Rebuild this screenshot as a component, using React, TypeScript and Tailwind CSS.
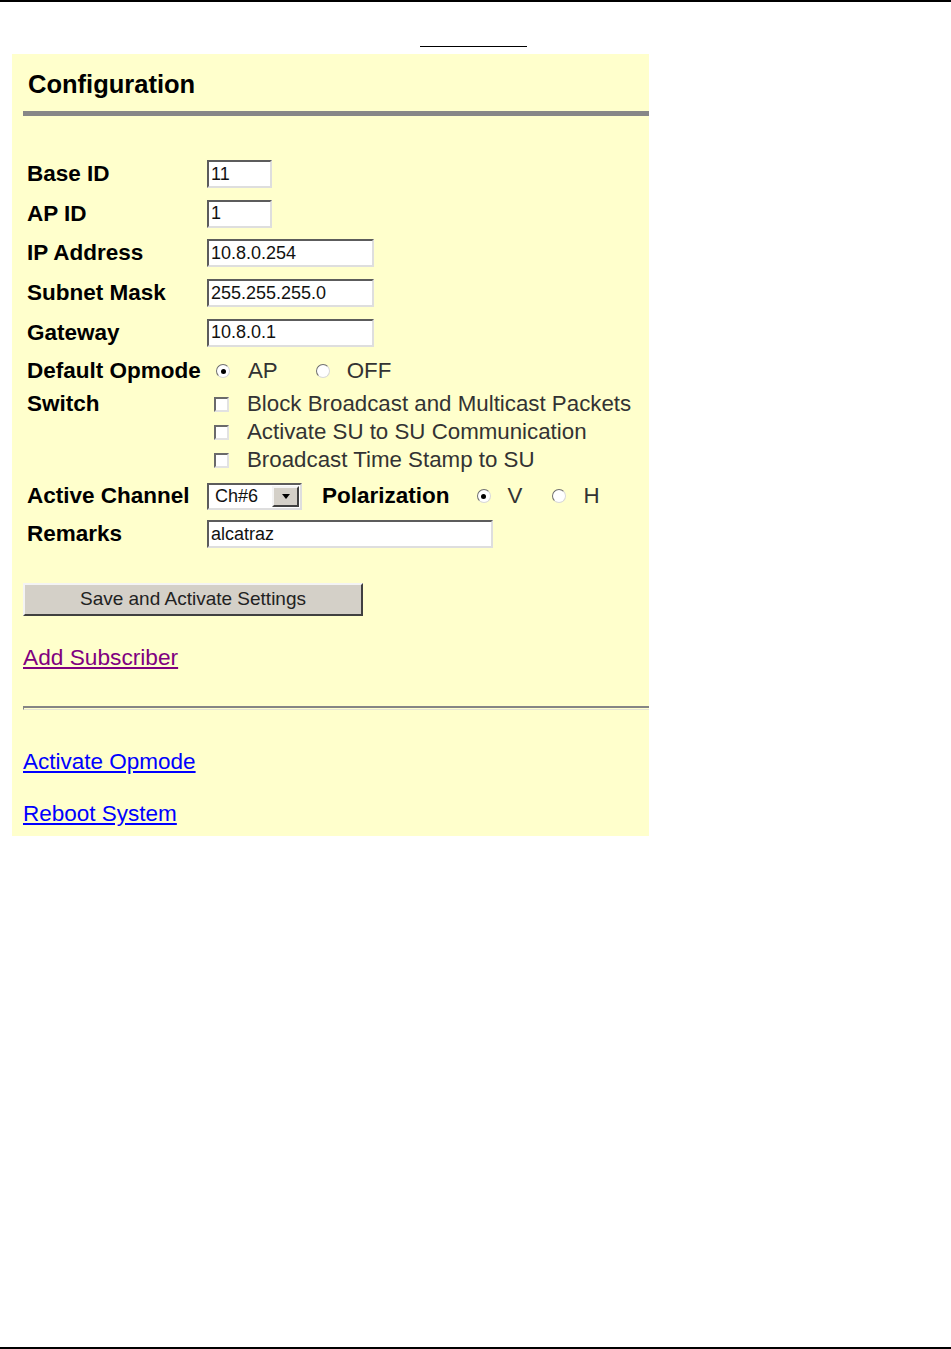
import React from 'react';

const inset =
  'border-2 border-t-[#5c5c5c] border-l-[#5c5c5c] border-r-[#dedede] border-b-[#dedede] bg-white';

const Field = ({ value, width }: { value: string; width: string }) => (
  <input
    readOnly
    defaultValue={value}
    className={`${inset} ${width} h-[28px] px-[2px] text-[18px] leading-none text-[#111] outline-none`}
  />
);

const Radio = ({ checked }: { checked?: boolean }) => (
  <span className="flex h-[14px] w-[14px] shrink-0 items-center justify-center rounded-full border border-t-[#6f6f6f] border-l-[#6f6f6f] border-r-[#d8d8d8] border-b-[#d8d8d8] bg-white">
    {checked && <span className="h-[5px] w-[5px] rounded-full bg-black" />}
  </span>
);

const Checkbox = () => (
  <span className="block h-[15px] w-[15px] shrink-0 border-2 border-t-[#6a6a6a] border-l-[#6a6a6a] border-r-[#e2e2e2] border-b-[#e2e2e2] bg-white" />
);

const Label = ({ children }: { children: React.ReactNode }) => (
  <span className="ml-[4px] w-[180px] shrink-0 text-[22.5px] font-bold text-black">{children}</span>
);

const options = [
  'Block Broadcast and Multicast Packets',
  'Activate SU to SU Communication',
  'Broadcast Time Stamp to SU',
];

export default function App() {
  return (
    <div
      className="flex min-h-[1349px] w-[951px] flex-col bg-white"
      style={{ fontFamily: '"Liberation Sans", Arial, sans-serif' }}
    >
      <div className="h-[2px] w-full bg-black" />
      <div className="ml-[420px] mt-[44px] h-px w-[107px] bg-black" />

      {/* Configuration panel */}
      <div className="ml-[12px] mt-[7px] flex h-[782px] w-[637px] flex-col bg-[#ffffcc] pl-[11px] pt-[15px]">
        <h1 className="ml-[5px] h-[30px] text-[25.5px] font-bold leading-[30px] text-black">Configuration</h1>
        <div className="mt-[12px] h-[5px] w-[626px] bg-[#878787]" />

        <div className="mt-[38px] flex flex-col">
          <div className="flex h-[40px] items-center">
            <Label>Base ID</Label>
            <Field value="11" width="w-[65px]" />
          </div>
          <div className="flex h-[39px] items-center">
            <Label>AP ID</Label>
            <Field value="1" width="w-[65px]" />
          </div>
          <div className="flex h-[40px] items-center">
            <Label>IP Address</Label>
            <Field value="10.8.0.254" width="w-[167px]" />
          </div>
          <div className="flex h-[40px] items-center">
            <Label>Subnet Mask</Label>
            <Field value="255.255.255.0" width="w-[167px]" />
          </div>
          <div className="flex h-[39px] items-center">
            <Label>Gateway</Label>
            <Field value="10.8.0.1" width="w-[167px]" />
          </div>

          <div className="flex h-[38px] items-center text-[22.3px] text-[#333]">
            <Label>Default Opmode</Label>
            <span className="ml-[9px]"><Radio checked /></span>
            <span className="ml-[18px]">AP</span>
            <span className="ml-[38px]"><Radio /></span>
            <span className="ml-[17px]">OFF</span>
          </div>

          <div className="flex">
            <div className="flex h-[28px] items-center">
              <Label>Switch</Label>
            </div>
            <div className="flex flex-col">
              {options.map((o) => (
                <div key={o} className="flex h-[28px] items-center text-[22.3px] text-[#333]">
                  <span className="ml-[7px]"><Checkbox /></span>
                  <span className="ml-[18px]">{o}</span>
                </div>
              ))}
            </div>
          </div>

          <div className="flex h-[44px] items-center text-[22.3px] text-[#333]">
            <Label>Active Channel</Label>
            <div className={`${inset} flex h-[27px] w-[95px] items-center`}>
              <span className="flex-1 pl-[6px] text-[18px] leading-none text-[#111]">Ch#6</span>
              <span className="mr-[1px] flex h-[21px] w-[27px] items-center justify-center border-2 border-t-[#f4f4f4] border-l-[#f4f4f4] border-r-[#404040] border-b-[#404040] bg-[#d4d0c8]">
                <svg width="8" height="5" viewBox="0 0 8 5">
                  <path d="M0 0h8L4 5z" fill="#000" />
                </svg>
              </span>
            </div>
            <span className="ml-[20px] text-[22.5px] font-bold text-black">Polarization</span>
            <span className="ml-[27px]"><Radio checked /></span>
            <span className="ml-[17px]">V</span>
            <span className="ml-[30px]"><Radio /></span>
            <span className="ml-[17px]">H</span>
          </div>

          <div className="flex h-[32px] items-center">
            <Label>Remarks</Label>
            <Field value="alcatraz" width="w-[286px]" />
          </div>
        </div>

        <button className="mt-[33px] h-[33px] w-[340px] border-2 border-t-[#f4f4f4] border-l-[#f4f4f4] border-r-[#404040] border-b-[#404040] bg-[#d4d0c8] text-[19px] text-[#222]">
          Save and Activate Settings
        </button>

        <a href="#" className="mt-[26px] h-[30px] self-start text-[22.7px] leading-[30px] text-[#800080] underline">
          Add Subscriber
        </a>

        <div className="mt-[34px] h-[4px] w-[626px] border-t-2 border-l border-b border-t-[#858585] border-l-[#858585] border-b-[#e4e4d4]" />

        <a href="#" className="mt-[37px] h-[30px] self-start text-[22.5px] leading-[30px] text-[#0000ff] underline">
          Activate Opmode
        </a>
        <a href="#" className="mt-[22px] h-[30px] self-start text-[22.5px] leading-[30px] text-[#0000ff] underline">
          Reboot System
        </a>
      </div>

      <div className="flex-1" />
      <div className="h-[2px] w-full bg-black" />
    </div>
  );
}
